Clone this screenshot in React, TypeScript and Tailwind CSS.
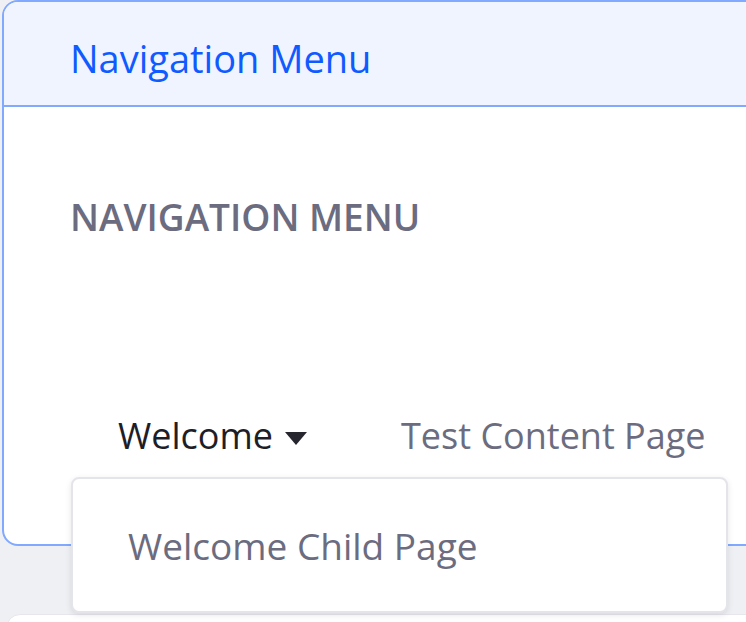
const font = { fontFamily: '"Open Sans", "Noto Sans", sans-serif' };

export default function App() {
  return (
    <div className="relative h-[622px] w-[746px] overflow-hidden bg-[#eff0f4]" style={font}>
      <div className="ml-[2px] w-[780px] h-[546px] rounded-[16px] border-2 border-[#80a9ff] bg-white overflow-hidden">
        <div className="h-[105px] border-b-2 border-[#80a9ff] bg-[#eff4ff] pl-[66px] pt-[33px]">
          <h1 className="text-[38px] leading-[46px] text-[#0f5bff]">Navigation Menu</h1>
        </div>
        <div className="pl-[66px] pt-[88px]">
          <h2 className="text-[37px] leading-[44px] font-semibold text-[#6c6c80]">NAVIGATION MENU</h2>
          <nav className="mt-[175px] flex items-center pl-[48px] text-[36px] leading-[44px]">
            <span className="flex items-center text-[#1e1e28]">
              Welcome
              <svg width="22" height="13" viewBox="0 0 22 13" className="ml-[12px] mt-[4px]">
                <path d="M0 0H22L11 13Z" fill="#26262f" />
              </svg>
            </span>
            <span className="ml-[94px] text-[#6c6c80]">Test Content Page</span>
          </nav>
        </div>
      </div>
      <div className="absolute left-[71px] top-[477px] h-[136px] w-[657px] rounded-[8px] border-2 border-[#e4e4eb] bg-white shadow-[0_2px_6px_rgba(0,0,0,0.1)] pl-[55px] pt-[45px]">
        <span className="text-[37px] leading-[44px] text-[#6c6c80]">Welcome Child Page</span>
      </div>
      <div className="ml-[6px] mt-[68px] h-[40px] w-[760px] rounded-[14px] border border-[#e6e6ec] bg-white" />
    </div>
  );
}
